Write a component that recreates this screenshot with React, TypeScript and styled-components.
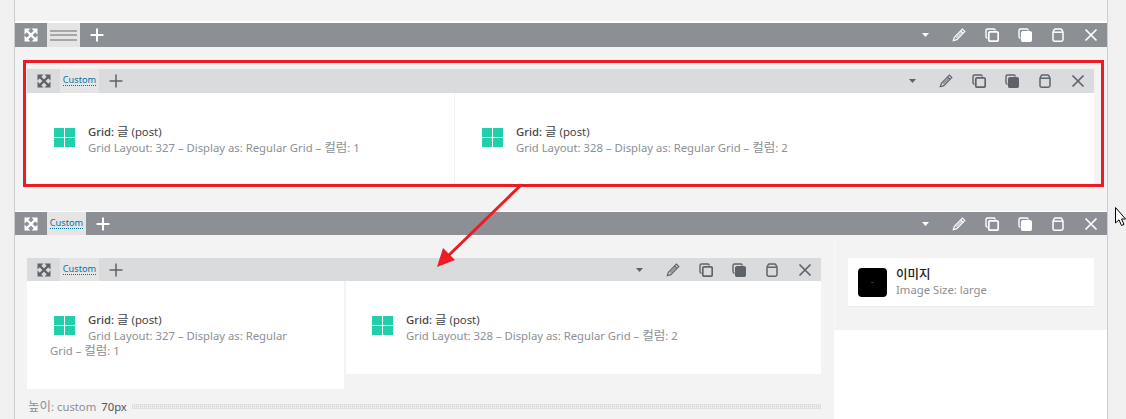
import React from "react";
import styled, { createGlobalStyle } from "styled-components";

const GlobalStyle = createGlobalStyle`
  html, body {
    margin: 0;
    padding: 0;
    height: 419px;
    overflow: hidden;
    background: #f0f0f0;
    font-family: "Noto Sans", "Noto Sans CJK KR", sans-serif;
    font-size: 11.3px;
  }
  * {
    box-sizing: border-box;
  }
`;

const Expand = () => (
  <svg width="14" height="14" viewBox="0 0 14 14" fill="currentColor">
    <path d="M0.500 0.500h6L0.500 6.500zM13.500 0.500v6l-6-6zM0.500 13.500v-6l6 6zM13.500 13.500h-6l6-6z" />
    <path d="M2.500 2.500l9 9M11.500 2.500l-9 9" stroke="currentColor" strokeWidth="2.400" />
  </svg>
);

const Plus = ({ weight }: { weight: number }) => (
  <svg width="14" height="14" viewBox="0 0 14 14" stroke="currentColor" strokeWidth={weight}>
    <path d="M0.500 7h13M7 0.500v13" />
  </svg>
);

const Caret = () => (
  <svg width="7" height="4" viewBox="0 0 7 4" fill="currentColor">
    <path d="M0 0h7L3.500 4z" />
  </svg>
);

const Pencil = () => (
  <svg width="14" height="14" viewBox="0 0 14 14" fill="none" stroke="currentColor" strokeWidth="1.200">
    <path d="M10.400 1.200l2.400 2.400-8 8-3.500 1.100 1.100-3.500zM8.700 2.900l2.400 2.400" />
    <path d="M3.400 9.300l5.800-5.800 1.300 1.300-5.800 5.800z" fill="currentColor" fillOpacity="0.6" stroke="none" />
  </svg>
);

const Copy = ({ solid }: { solid?: boolean }) => (
  <svg width="14" height="14" viewBox="0 0 14 14" fill="none" stroke="currentColor">
    <path d="M2.500 10.200A1.500 1.500 0 0 1 1 8.800V2.500A1.500 1.500 0 0 1 2.500 1h6.300a1.500 1.500 0 0 1 1.400 1.500" strokeWidth="1.400" />
    <rect x="3.800" y="3.800" width="9.400" height="9.400" rx="1.300" strokeWidth="1.700" fill={solid ? "currentColor" : "none"} />
  </svg>
);

const Clipboard = () => (
  <svg width="14" height="14" viewBox="0 0 14 14" fill="none" stroke="currentColor" strokeWidth="1.500">
    <path d="M4.500 1h5c0.700 0 1.200 0.400 1.500 1l1 2.200v7.300a1.700 1.700 0 0 1-1.700 1.700H3.700A1.700 1.700 0 0 1 2 11.500V4.200L3 2c0.300-0.600 0.800-1 1.500-1z" />
    <path d="M2.200 4.200h9.600" />
  </svg>
);

const Close = () => (
  <svg width="14" height="14" viewBox="0 0 14 14" stroke="currentColor" strokeWidth="1.700">
    <path d="M1.500 1.500l11 11M12.500 1.500l-11 11" />
  </svg>
);

const Page = styled.div`
  position: relative;
  width: 1126px;
  height: 419px;
  padding: 0 18px 0 14px;
  overflow: hidden;
`;

const Canvas = styled.main`
  height: 419px;
  padding-top: 21px;
  background: #f3f3f3;
  border-left: 1px solid #cccccc;
  border-right: 1px solid #cccccc;
  overflow: hidden;
`;

const Toolbar = styled.div<{ $dark?: boolean; $height: number }>`
  display: flex;
  align-items: stretch;
  height: ${(p) => p.$height}px;
  background: ${(p) => (p.$dark ? "#8c8f94" : "#dadbdd")};
  color: ${(p) => (p.$dark ? "#ffffff" : "#5f6368")};
  box-sizing: content-box;
`;

const OuterBar = styled(Toolbar)<{ $line: number }>`
  border-top: ${(p) => p.$line}px solid #ffffff;
`;

const ToolButton = styled.span<{ $width?: number }>`
  display: flex;
  flex: none;
  align-items: center;
  justify-content: center;
  width: ${(p) => p.$width ?? 33}px;
`;

const Spacer = styled.div`
  flex: 1;
`;

const Tab = styled.a<{ $width: number }>`
  display: flex;
  flex: none;
  align-items: center;
  justify-content: center;
  width: ${(p) => p.$width}px;
  background: #e5e5e6;
`;

const TabLabel = styled.span`
  margin-top: -2px;
  color: #0073aa;
  font-size: 9.200px;
  line-height: 11px;
  border-bottom: 1px dotted #0073aa;
`;

const HandleLines = styled.span`
  width: 27px;
  height: 11px;
  border-top: 2px solid #a6a7a9;
  border-bottom: 2px solid #a6a7a9;
  background: linear-gradient(#a6a7a9, #a6a7a9) center / 100% 2px no-repeat;
`;

const FirstRowBody = styled.section`
  padding: 22px 13px 25px 12px;
`;

const SecondRowBody = styled.section`
  display: flex;
  height: 184px;
`;

const MainColumn = styled.div`
  flex: 1;
  padding: 23px 13px 0 12px;
`;

const SideColumn = styled.aside`
  flex: none;
  width: 273px;
  background: #ffffff;
`;

const SidePanel = styled.div`
  height: 95px;
  padding: 23px 13px 0 13px;
  background: #f3f3f3;
  border-left: 1px solid #f8f8f8;
`;

const Columns = styled.div`
  display: flex;
  align-items: flex-start;
`;

const Element = styled.div<{ $width?: number; $divided?: boolean; $gap?: number; $inset?: number }>`
  flex: ${(p) => (p.$width ? `none` : 1)};
  width: ${(p) => (p.$width ? `${p.$width}px` : "auto")};
  min-height: 93px;
  margin-left: ${(p) => p.$gap ?? 0}px;
  padding: 31px 40px 31px ${(p) => p.$inset ?? 23}px;
  background: #ffffff;
  border-left: ${(p) => (p.$divided ? "1px solid #f0f0f0" : "none")};
  line-height: 15px;
  color: #8c8f94;
`;

const GridIcon = styled.span`
  float: left;
  display: grid;
  grid-template-columns: repeat(2, 10px);
  grid-template-rows: repeat(2, 9px);
  gap: 1px;
  margin: 4px 13px 0 4px;
`;

const GridCell = styled.i`
  display: block;
  background: #21cfab;
`;

const ElementTitle = styled.div`
  height: 16px;
  color: #444444;
  strong {
    font-weight: 500;
  }
`;

const ElementMeta = styled.span`
  color: #8c8f94;
`;

const Hangul = styled.span`
  font-size: 12.500px;
  line-height: 1;
`;

const HeightRow = styled.div`
  display: flex;
  align-items: center;
  gap: 5px;
  height: 34px;
  padding-left: 1px;
  color: #8c8f94;
`;

const HeightValue = styled.b`
  margin-left: 2px;
  font-weight: 400;
  color: #555555;
`;

const HeightRule = styled.span`
  flex: 1;
  height: 5px;
  background-image: repeating-linear-gradient(90deg, #dddddd 0 1px, transparent 1px 2px),
    repeating-linear-gradient(0deg, #e4e4e4 0 1px, transparent 1px 2px);
`;

const ImageCard = styled.div`
  display: flex;
  align-items: center;
  gap: 9px;
  height: 49px;
  padding-left: 10px;
  background: #ffffff;
  border-bottom: 1px solid #ebebeb;
`;

const Thumb = styled.span`
  display: flex;
  flex: none;
  align-items: center;
  justify-content: center;
  width: 29px;
  height: 29px;
  border-radius: 4px;
  background: #000000;

  &::after {
    content: "";
    width: 3px;
    height: 1px;
    background: #333333;
  }
`;

const CardText = styled.div`
  line-height: 16px;
`;

const CardTitle = styled.div`
  height: 15px;
  line-height: 15px;
  color: #222222;
  font-weight: 500;
`;

const Highlight = styled.div`
  position: absolute;
  left: 23px;
  top: 60px;
  width: 1081px;
  height: 127px;
  border: 3px solid #ed1c24;
  pointer-events: none;
`;

const Overlay = styled.svg`
  position: absolute;
  left: 0;
  top: 0;
  pointer-events: none;
`;

const Cursor = styled.svg`
  position: absolute;
  left: 1115px;
  top: 207px;
`;

const GridGlyph = () => (
  <GridIcon>
    <GridCell />
    <GridCell />
    <GridCell />
    <GridCell />
  </GridIcon>
);

function RightTools() {
  return (
    <>
      <Spacer />
      <ToolButton><Caret /></ToolButton>
      <ToolButton><Pencil /></ToolButton>
      <ToolButton><Copy /></ToolButton>
      <ToolButton><Copy solid /></ToolButton>
      <ToolButton><Clipboard /></ToolButton>
      <ToolButton><Close /></ToolButton>
    </>
  );
}

function GridElement({ layout, columns }: { layout: number; columns: number }) {
  return (
    <>
      <GridGlyph />
      <ElementTitle><strong>Grid:</strong> <Hangul>글</Hangul> (post)</ElementTitle>
      <ElementMeta>
        Grid Layout: {layout} – Display as: Regular Grid – <Hangul>컬럼</Hangul>: {columns}
      </ElementMeta>
    </>
  );
}

export default function App() {
  return (
    <Page>
      <GlobalStyle />
      <Canvas>
        <OuterBar $dark $height={24} $line={2}>
          <ToolButton $width={32}><Expand /></ToolButton>
          <Tab $width={33}><HandleLines /></Tab>
          <ToolButton $width={34}><Plus weight={2} /></ToolButton>
          <RightTools />
        </OuterBar>
        <FirstRowBody>
          <Toolbar $height={24}>
            <ToolButton><Expand /></ToolButton>
            <Tab $width={39}><TabLabel>Custom</TabLabel></Tab>
            <ToolButton $width={34}><Plus weight={1.5} /></ToolButton>
            <RightTools />
          </Toolbar>
          <Columns>
            <Element $width={427}>
              <GridElement layout={327} columns={1} />
            </Element>
            <Element $divided>
              <GridElement layout={328} columns={2} />
            </Element>
          </Columns>
        </FirstRowBody>
        <OuterBar $dark $height={23} $line={1}>
          <ToolButton $width={32}><Expand /></ToolButton>
          <Tab $width={39}><TabLabel>Custom</TabLabel></Tab>
          <ToolButton $width={34}><Plus weight={2} /></ToolButton>
          <RightTools />
        </OuterBar>
        <SecondRowBody>
          <MainColumn>
            <Toolbar $height={23}>
              <ToolButton><Expand /></ToolButton>
              <Tab $width={39}><TabLabel>Custom</TabLabel></Tab>
              <ToolButton $width={34}><Plus weight={1.5} /></ToolButton>
              <RightTools />
            </Toolbar>
            <Columns>
              <Element $width={317}>
                <GridElement layout={327} columns={1} />
              </Element>
              <Element $gap={2} $inset={22}>
                <GridElement layout={328} columns={2} />
              </Element>
            </Columns>
            <HeightRow>
              <span><Hangul>높이</Hangul>: custom <HeightValue>70px</HeightValue></span>
              <HeightRule />
            </HeightRow>
          </MainColumn>
          <SideColumn>
            <SidePanel>
              <ImageCard>
                <Thumb />
                <CardText>
                  <CardTitle><Hangul>이미지</Hangul></CardTitle>
                  <ElementMeta>Image Size: large</ElementMeta>
                </CardText>
              </ImageCard>
            </SidePanel>
          </SideColumn>
        </SecondRowBody>
      </Canvas>
      <Highlight />
      <Overlay width="1126" height="419" viewBox="0 0 1126 419">
        <path d="M520 186L447 257" stroke="#ed1c24" strokeWidth="3" fill="none" />
        <path d="M437 267L443 248L455 260z" fill="#ed1c24" />
      </Overlay>
      <Cursor width="11" height="20" viewBox="0 0 11 20">
        <path d="M0.500 0.500V16L4 12.800 6.500 18.500 9 17.400 6.500 12H10.500z" fill="#ffffff" stroke="#000000" strokeWidth="1" />
      </Cursor>
    </Page>
  );
}
